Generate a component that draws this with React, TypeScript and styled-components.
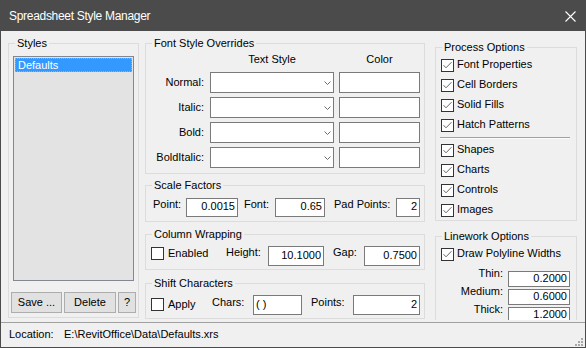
import React from "react";
import styled, { createGlobalStyle } from "styled-components";

const GlobalStyle = createGlobalStyle`
  html, body { margin: 0; padding: 0; background: #f0f0f0; }
  body { font-family: "Liberation Sans", Arial, sans-serif; font-size: 11px; color: #000; }
  *, *::before, *::after { box-sizing: border-box; }
`;

const Window = styled.div`
  width: 586px;
  height: 348px;
  border: 1px solid #4b4b4b;
  background: #f0f0f0;
  display: flex;
  flex-direction: column;
  font-family: "Liberation Sans", Arial, sans-serif;
  font-size: 11px;
  line-height: 13px;
  color: #000;
  overflow: hidden;
`;

const TitleBar = styled.div`
  flex: none;
  height: 30px;
  background: #4b4b4b;
  color: #fff;
  display: flex;
  align-items: center;
  justify-content: space-between;
  padding: 0 9px 0 8px;
`;

const Title = styled.span`
  font-size: 12px;
  line-height: 14px;
  letter-spacing: -0.3px;
`;

const Body = styled.div`
  flex: none;
  height: 291px;
  display: flex;
  align-items: flex-start;
  padding: 6px 8px 2px 7px;
`;

const Group = styled.fieldset<{ $mt?: number }>`
  flex: none;
  margin: ${(p) => p.$mt ?? 0}px 0 0 0;
  padding: 0;
  min-width: 0;
  border: 1px solid #dcdcdc;
`;

const Legend = styled.legend`
  margin-left: 6px;
  padding: 0 2px;
  font-size: 11px;
  line-height: 13px;
`;

const StylesGroup = styled(Group)`
  width: 131px;
  height: 281px;
`;

const ListBox = styled.div`
  margin: 6px 4px 0 4px;
  height: 225px;
  border: 1px solid #828790;
  background: #e3e3e3;
  padding: 1px;
`;

const ListItem = styled.div`
  height: 14px;
  line-height: 12px;
  padding: 0 2px;
  background: #3399ff;
  color: #fff;
  border: 1px dotted #ff9b2f;
`;

const ButtonRow = styled.div`
  display: flex;
  gap: 2px;
  margin: 11px 2px 4px 2px;
`;

const Button = styled.button<{ $w: number }>`
  flex: none;
  width: ${(p) => p.$w}px;
  height: 21px;
  padding: 0;
  border: 1px solid #adadad;
  background: #e1e1e1;
  color: #000;
  font: inherit;
  line-height: 13px;
`;

const MiddleColumn = styled.div`
  flex: none;
  width: 280px;
  margin-left: 6px;
  display: flex;
  flex-direction: column;
`;

const RightColumn = styled.div`
  flex: none;
  width: 142px;
  height: 279px;
  margin: 4px 0 0 10px;
  display: flex;
  flex-direction: column;
  overflow: hidden;
`;

const OverrideGrid = styled.div`
  display: grid;
  grid-template-columns: 59px 124px 81px;
  grid-template-rows: 18px repeat(4, 21px);
  column-gap: 5px;
  row-gap: 4px;
  padding: 0 0 5px 0;
`;

const Corner = styled.div``;

const ColHeader = styled.div`
  align-self: center;
  text-align: center;
`;

const RowLabel = styled.div`
  align-self: center;
  text-align: right;
  padding-right: 1px;
  white-space: nowrap;
`;

const Combo = styled.div`
  border: 1px solid #7a7a7a;
  background: #fff;
  display: flex;
  align-items: center;
  justify-content: flex-end;
  padding-right: 2px;
`;

const ColorBox = styled.div`
  border: 1px solid #7a7a7a;
  background: #fff;
`;

const FieldRow = styled.div<{ $pt: number; $pb: number; $pl: number }>`
  display: flex;
  align-items: flex-start;
  padding: ${(p) => p.$pt}px 0 ${(p) => p.$pb}px ${(p) => p.$pl}px;
`;

const FieldLabel = styled.span<{ $w: number; $ml?: number; $mt?: number }>`
  flex: none;
  width: ${(p) => p.$w}px;
  margin-left: ${(p) => p.$ml ?? 0}px;
  margin-top: ${(p) => p.$mt ?? 0}px;
  white-space: nowrap;
`;

const TextBox = styled.div<{ $w?: number; $h: number; $left?: boolean }>`
  flex: none;
  ${(p) => (p.$w ? `width: ${p.$w}px;` : "")}
  height: ${(p) => p.$h}px;
  border: 1px solid #7a7a7a;
  background: #fff;
  padding: 0 2px;
  line-height: ${(p) => p.$h - 4}px;
  text-align: ${(p) => (p.$left ? "left" : "right")};
  overflow: hidden;
  white-space: nowrap;
`;

const CheckLabel = styled.label<{ $w: number; $mt?: number }>`
  flex: none;
  width: ${(p) => p.$w}px;
  margin-top: ${(p) => p.$mt ?? 0}px;
  display: flex;
  align-items: center;
  gap: 4px;
  white-space: nowrap;
`;

const CheckBoxBox = styled.span<{ $mt?: number }>`
  flex: none;
  width: 13px;
  height: 13px;
  margin-top: ${(p) => p.$mt ?? 0}px;
  border: 1px solid #333;
  background: #fff;
  display: flex;
  align-items: center;
  justify-content: center;
`;

const CheckRow = styled.div`
  height: 20px;
  display: flex;
  align-items: flex-start;
  gap: 3px;
  padding: 3px 0 0 5px;
  white-space: nowrap;
`;

const ProcessBody = styled.div`
  padding-top: 1px;
`;

const Separator = styled.div`
  height: 2px;
  margin: 2px 6px 1px 4px;
  border-top: 1px solid #a0a0a0;
  border-bottom: 1px solid #fbfbfb;
`;

const LineworkBody = styled.div`
  padding-top: 1px;
`;

const WidthGrid = styled.div`
  display: grid;
  grid-template-columns: 67px 62px;
  grid-auto-rows: 17px;
  column-gap: 5px;
  row-gap: 1px;
  margin-top: 7px;
  padding-bottom: 4px;
`;

const WidthLabel = styled.span`
  align-self: start;
  margin-top: -4px;
  text-align: right;
  white-space: nowrap;
`;

const StatusBar = styled.div`
  flex: 1;
  position: relative;
  border-top: 1px solid #a0a0a0;
  display: flex;
  padding: 5px 0 0 8px;
  white-space: nowrap;
`;

const StatusLabel = styled.span`
  flex: none;
  width: 55px;
`;

const Grip = styled.svg`
  position: absolute;
  right: 2px;
  bottom: 1px;
`;

const CloseIcon = () => (
  <svg width="11" height="11" viewBox="0 0 11 11">
    <path d="M0.5 0.5 L10.5 10.5 M10.5 0.5 L0.5 10.5" stroke="#fff" strokeWidth="1.1" />
  </svg>
);

const Chevron = () => (
  <svg width="7" height="4" viewBox="0 0 7 4">
    <polyline points="0.5,0.5 3.5,3.5 6.5,0.5" fill="none" stroke="#6d6d6d" strokeWidth="1" />
  </svg>
);

const CheckBox = ({ checked, mt }: { checked?: boolean; mt?: number }) => (
  <CheckBoxBox $mt={mt}>
    {checked && (
      <svg width="11" height="11" viewBox="0 0 11 11">
        <polyline points="1.5,5.2 4,7.8 9.5,2.2" fill="none" stroke="#666" strokeWidth="1" />
      </svg>
    )}
  </CheckBoxBox>
);

const overrides = ["Normal:", "Italic:", "Bold:", "BoldItalic:"];
const processA = ["Font Properties", "Cell Borders", "Solid Fills", "Hatch Patterns"];
const processB = ["Shapes", "Charts", "Controls", "Images"];
const widths = [
  ["Thin:", "0.2000"],
  ["Medium:", "0.6000"],
  ["Thick:", "1.2000"],
];

export default function App() {
  return (
    <>
      <GlobalStyle />
      <Window>
        <TitleBar>
          <Title>Spreadsheet Style Manager</Title>
          <CloseIcon />
        </TitleBar>
        <Body>
          <StylesGroup>
            <Legend>Styles</Legend>
            <ListBox>
              <ListItem>Defaults</ListItem>
            </ListBox>
            <ButtonRow>
              <Button $w={51}>Save ...</Button>
              <Button $w={52}>Delete</Button>
              <Button $w={18}>?</Button>
            </ButtonRow>
          </StylesGroup>

          <MiddleColumn>
            <Group>
              <Legend>Font Style Overrides</Legend>
              <OverrideGrid>
                <Corner />
                <ColHeader>Text Style</ColHeader>
                <ColHeader>Color</ColHeader>
                {overrides.map((o) => (
                  <React.Fragment key={o}>
                    <RowLabel>{o}</RowLabel>
                    <Combo>
                      <Chevron />
                    </Combo>
                    <ColorBox />
                  </React.Fragment>
                ))}
              </OverrideGrid>
            </Group>

            <Group $mt={5}>
              <Legend>Scale Factors</Legend>
              <FieldRow $pt={6} $pb={4} $pl={7}>
                <FieldLabel $w={33}>Point:</FieldLabel>
                <TextBox $w={52} $h={19}>0.0015</TextBox>
                <FieldLabel $w={31} $ml={6}>Font:</FieldLabel>
                <TextBox $w={50} $h={19}>0.65</TextBox>
                <FieldLabel $w={62} $ml={9}>Pad Points:</FieldLabel>
                <TextBox $w={24} $h={19}>2</TextBox>
              </FieldRow>
            </Group>

            <Group $mt={6}>
              <Legend>Column Wrapping</Legend>
              <FieldRow $pt={5} $pb={3} $pl={5}>
                <CheckLabel $w={75} $mt={1}>
                  <CheckBox />
                  <span>Enabled</span>
                </CheckLabel>
                <FieldLabel $w={42}>Height:</FieldLabel>
                <TextBox $w={56} $h={20}>10.1000</TextBox>
                <FieldLabel $w={31} $ml={9}>Gap:</FieldLabel>
                <TextBox $w={56} $h={20}>0.7500</TextBox>
              </FieldRow>
            </Group>

            <Group $mt={7}>
              <Legend>Shift Characters</Legend>
              <FieldRow $pt={5} $pb={3} $pl={5}>
                <CheckLabel $w={61} $mt={3}>
                  <CheckBox />
                  <span>Apply</span>
                </CheckLabel>
                <FieldLabel $w={41} $mt={1}>Chars:</FieldLabel>
                <TextBox $w={49} $h={20} $left>( )</TextBox>
                <FieldLabel $w={42} $ml={9} $mt={1}>Points:</FieldLabel>
                <TextBox $w={67} $h={20}>2</TextBox>
              </FieldRow>
            </Group>
          </MiddleColumn>

          <RightColumn>
            <Group>
              <Legend>Process Options</Legend>
              <ProcessBody>
                {processA.map((t) => (
                  <CheckRow key={t}>
                    <CheckBox checked mt={1} />
                    <span>{t}</span>
                  </CheckRow>
                ))}
                <Separator />
                {processB.map((t) => (
                  <CheckRow key={t}>
                    <CheckBox checked mt={1} />
                    <span>{t}</span>
                  </CheckRow>
                ))}
              </ProcessBody>
            </Group>

            <Group $mt={9}>
              <Legend>Linework Options</Legend>
              <LineworkBody>
                <CheckRow>
                  <CheckBox checked mt={1} />
                  <span>Draw Polyline Widths</span>
                </CheckRow>
                <WidthGrid>
                  {widths.map(([l, v]) => (
                    <React.Fragment key={l}>
                      <WidthLabel>{l}</WidthLabel>
                      <TextBox $h={16}>{v}</TextBox>
                    </React.Fragment>
                  ))}
                </WidthGrid>
              </LineworkBody>
            </Group>
          </RightColumn>
        </Body>

        <StatusBar>
          <StatusLabel>Location:</StatusLabel>
          <span>E:\RevitOffice\Data\Defaults.xrs</span>
          <Grip width="8" height="8" viewBox="0 0 8 8">
            <g fill="#a8a8a8">
              <rect x="6" y="0" width="2" height="2" />
              <rect x="6" y="3" width="2" height="2" />
              <rect x="3" y="3" width="2" height="2" />
              <rect x="6" y="6" width="2" height="2" />
              <rect x="3" y="6" width="2" height="2" />
              <rect x="0" y="6" width="2" height="2" />
            </g>
          </Grip>
        </StatusBar>
      </Window>
    </>
  );
}
